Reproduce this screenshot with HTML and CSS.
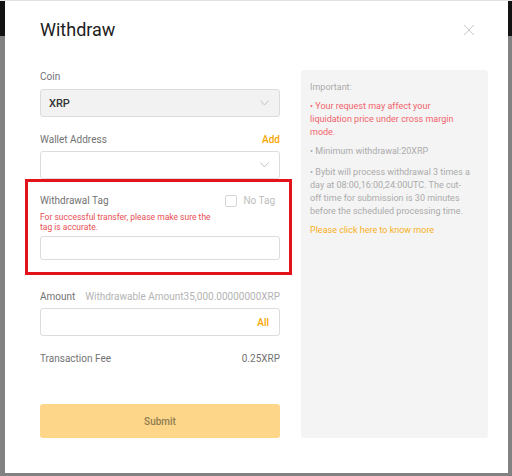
FILE: index.html
```html
<!DOCTYPE html>
<html lang="en">
<head>
    <meta charset="UTF-8">
    <meta name="viewport" content="width=device-width, initial-scale=1.0">
    <title>Withdraw</title>
    <link rel="stylesheet" href="styles.css">
</head>
<body>
    <div class="backdrop">
        <div class="modal">
            <div class="modal-header">
                <h1 class="modal-title">Withdraw</h1>
                <svg class="close" width="12" height="12" viewBox="0 0 12 12">
                    <path d="M1 1L11 11M11 1L1 11" stroke="#c9c9c9" stroke-width="1" fill="none"/>
                </svg>
            </div>

            <div class="modal-body">
                <div class="form">
                    <div class="field">
                        <div class="label-row"><span>Coin</span></div>
                        <div class="box box-select">
                            <span class="coin">XRP</span>
                            <svg class="chevron" width="9" height="6" viewBox="0 0 9 6"><path d="M0.5 0.5L4.5 5L8.5 0.5" stroke="#c4c4c4" fill="none"/></svg>
                        </div>
                    </div>

                    <div class="field field-last">
                        <div class="label-row"><span>Wallet Address</span><a class="link">Add</a></div>
                        <div class="box">
                            <span></span>
                            <svg class="chevron" width="9" height="6" viewBox="0 0 9 6"><path d="M0.5 0.5L4.5 5L8.5 0.5" stroke="#c4c4c4" fill="none"/></svg>
                        </div>
                    </div>

                    <div class="highlight">
                        <div class="label-row">
                            <span>Withdrawal Tag</span>
                            <label class="no-tag"><span class="check"></span>No Tag</label>
                        </div>
                        <p class="warning">For successful transfer, please make sure the tag is accurate.</p>
                        <div class="box box-small"></div>
                    </div>

                    <div class="field field-amount">
                        <div class="label-row">
                            <span>Amount</span>
                            <span class="muted">Withdrawable Amount35,000.00000000XRP</span>
                        </div>
                        <div class="box">
                            <span></span>
                            <a class="link">All</a>
                        </div>
                    </div>

                    <div class="fee-row">
                        <span>Transaction Fee</span>
                        <span>0.25XRP</span>
                    </div>

                    <button class="submit">Submit</button>
                </div>

                <div class="notice">
                    <p>Important:</p>
                    <p class="red">• Your request may affect your liquidation price under cross margin mode.</p>
                    <p>• Minimum withdrawal:20XRP</p>
                    <p class="wide">• Bybit will process withdrawal 3 times a day at 08:00,16:00,24:00UTC. The cut-off time for submission is 30 minutes before the scheduled processing time.</p>
                    <p class="orange">Please click here to know more</p>
                </div>
            </div>
        </div>
    </div>
</body>
</html>
```

FILE: styles.css
```css
body {
    margin: 0;
    font-family: Roboto, "Liberation Sans", sans-serif;
}

.backdrop {
    height: 476px;
    box-sizing: border-box;
    padding: 1px 4px 3px 5px;
    background: linear-gradient(#e2e2e2 0 1px, #121212 1px 36px, #828282 36px);
}

.modal {
    height: 100%;
    background: #fff;
    box-sizing: border-box;
    padding: 17px 20px 0 35px;
}

.modal-header {
    display: flex;
    align-items: center;
    justify-content: space-between;
    height: 24px;
}

.modal-title {
    margin: 0;
    font-size: 18px;
    font-weight: 400;
    color: #1c1c1c;
    line-height: 24px;
}

.close {
    margin-right: 13px;
}

.modal-body {
    display: grid;
    grid-template-columns: 240px 187px;
    gap: 21px;
    margin-top: 28px;
}

.form {
    display: flex;
    flex-direction: column;
}

.field {
    margin-bottom: 16px;
}

.field-last {
    margin-bottom: 0;
}

.label-row {
    display: flex;
    justify-content: space-between;
    align-items: center;
    font-size: 10px;
    line-height: 14px;
    color: #737373;
    margin-bottom: 4px;
}

.field:first-child .label-row {
    margin-bottom: 5px;
}

.link {
    color: #f7a600;
    font-weight: 500;
}

.box {
    height: 28px;
    box-sizing: border-box;
    border: 1px solid #dcdcdc;
    border-radius: 3px;
    display: flex;
    align-items: center;
    justify-content: space-between;
    padding: 0 10px 0 8px;
    font-size: 10px;
}

.box-select {
    background: #f2f2f2;
}

.coin {
    font-size: 11px;
    font-weight: 500;
    color: #333;
}

.highlight {
    border: 3px solid #e3131c;
    margin: 0 -12px 0 -15px;
    padding: 12px 9px 12px 12px;
}

.no-tag {
    display: flex;
    align-items: center;
    gap: 6px;
    color: #bdbdbd;
    font-size: 10px;
    margin-right: 5px;
}

.check {
    width: 12px;
    height: 12px;
    box-sizing: border-box;
    border: 1px solid #d6d6d6;
    border-radius: 2px;
}

.warning {
    margin: 1px 0 4px;
    max-width: 180px;
    font-size: 8.5px;
    line-height: 10px;
    color: #e94e55;
}

.box-small {
    height: 24px;
}

.field-amount {
    margin-top: 15px;
}

.muted {
    color: #b3b3b3;
    font-size: 10px;
}

.fee-row {
    display: flex;
    justify-content: space-between;
    font-size: 10px;
    line-height: 14px;
    color: #737373;
}

.submit {
    margin-top: 38px;
    height: 34px;
    border: none;
    border-radius: 3px;
    background: #fed68a;
    color: #8f7c4f;
    font-family: inherit;
    font-size: 10px;
    font-weight: 500;
}

.notice {
    background: #f4f4f4;
    border-radius: 3px;
    padding: 11px 16px 10px 9px;
    font-size: 9px;
    line-height: 13px;
    color: #ababab;
}

.notice p {
    margin: 0 0 6px;
}

.notice .wide {
    margin-top: 8px;
}

.notice .red {
    color: #f2636b;
}

.notice .orange {
    color: #f9b01e;
}
```
